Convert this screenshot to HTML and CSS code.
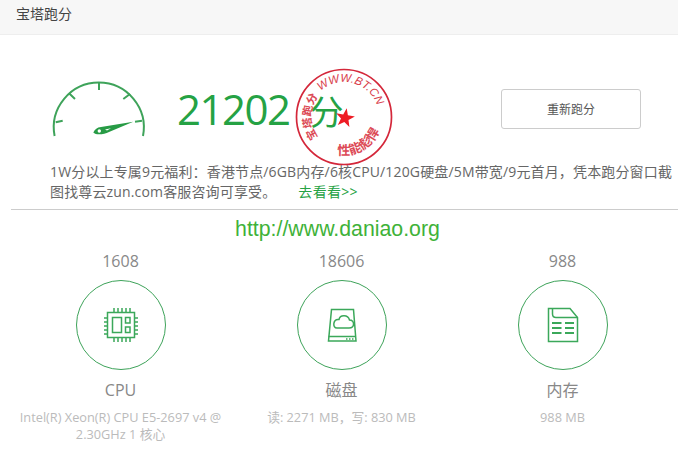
FILE: index.html
```html
<!DOCTYPE html>
<html lang="zh-CN">
<head>
<meta charset="utf-8">
<title>宝塔跑分</title>
<link rel="stylesheet" href="styles.css">
</head>
<body>
<header class="title-bar">宝塔跑分</header>
<section class="summary">
  <svg class="gauge" viewBox="0 0 100 64" width="100" height="64" aria-hidden="true">
    <path class="gauge-arc" d="M5.600 56 A45 45 0 1 1 94 56"/>
    <path class="gauge-tick" d="M50 2.700V10M20.300 13.600L26 19M81 14L74.300 19M6.700 42.300L13.700 40.700M93 40.700L86 41.700"/>
    <path class="gauge-needle" d="M44.300 52.500C46 49 48 47.500 52 47L84.300 41.700L60 52C55 54.500 47 55.500 44.300 52.500Z"/>
    <circle class="gauge-hole" cx="50.300" cy="51" r="1.700"/>
    <polygon class="gauge-hole" points="56,49.600 62,48.300 58,50.600"/>
  </svg>
  <div class="score">21202<span class="score-unit">分</span></div>
  <button class="rerun" type="button">重新跑分</button>
  <svg class="stamp" viewBox="0 0 100 100" width="100" height="100" aria-hidden="true">
    <defs>
      <path id="stamp-left" d="M24 70.300 A33 33 0 0 1 24 29.700"/>
      <path id="stamp-top" d="M26.600 24 A35 35 0 0 1 82.900 38"/>
      <path id="stamp-bottom" d="M37 85.700 A38 38 0 0 0 87.400 56.600"/>
    </defs>
    <circle class="stamp-ring" cx="50" cy="50" r="47.500"/>
    <text class="stamp-text stamp-left"><textPath href="#stamp-left">宝塔跑分</textPath></text>
    <text class="stamp-latin"><textPath href="#stamp-top">WWW.BT.CN</textPath></text>
    <text class="stamp-text stamp-bottom"><textPath href="#stamp-bottom" startOffset="10%">性能彪悍</textPath></text>
    <polygon class="stamp-star" points="52.700,41.200 53.900,48.200 60.900,49.600 54.500,52.900 55.400,60 50.300,54.900 43.800,58 47,51.600 42.200,46.300 49.200,47.400"/>
  </svg>
</section>
<p class="promo">1W分以上专属9元福利：香港节点/6GB内存/6核CPU/120G硬盘/5M带宽/9元首月，凭本跑分窗口截图找尊云zun.com客服咨询可享受。<a class="promo-link" href="#">去看看&gt;&gt;</a></p>
<hr class="rule">
<p class="site-url">http://www.daniao.org</p>
<section class="stats">
  <article class="stat">
    <div class="stat-score">1608</div>
    <div class="stat-ring">
      <svg class="stat-icon" viewBox="0 0 36 36" width="36" height="36" aria-hidden="true">
        <rect x="4.500" y="5.500" width="27" height="25"/>
        <rect x="9.500" y="10.500" width="9" height="15"/>
        <rect x="22.500" y="10.500" width="4.500" height="5.500"/>
        <rect x="22.500" y="20" width="4.500" height="5.500"/>
        <path d="M11 1V5M15 1V5M19 1V5M23 1V5M27 1V5M11 31V35M15 31V35M19 31V35M23 31V35M27 31V35M1 11H4M1 15H4M1 19H4M1 23H4M1 27H4M32 11H35M32 15H35M32 19H35M32 23H35M32 27H35"/>
      </svg>
    </div>
    <div class="stat-name">CPU</div>
    <div class="stat-detail">Intel(R) Xeon(R) CPU E5-2697 v4 @ 2.30GHz 1 核心</div>
  </article>
  <article class="stat">
    <div class="stat-score">18606</div>
    <div class="stat-ring">
      <svg class="stat-icon" viewBox="0 0 36 36" width="36" height="36" aria-hidden="true">
        <path d="M7.500 2.500H29.500L32 34H4.500Z"/>
        <path d="M4.500 29.500H32"/>
        <path d="M13 21H25C31 21 31 13 25.500 13C24 7.500 16 7.500 15 12.500C9 11.500 8 21 13 21Z"/>
        <path d="M22 32H23.500M25 32H26.500M28 32H29.500"/>
      </svg>
    </div>
    <div class="stat-name">磁盘</div>
    <div class="stat-detail">读: 2271 MB，写: 830 MB</div>
  </article>
  <article class="stat">
    <div class="stat-score">988</div>
    <div class="stat-ring">
      <svg class="stat-icon" viewBox="0 0 36 36" width="36" height="36" aria-hidden="true">
        <path d="M3.500 1.500H25L32.500 10.500V34.500H3.500Z"/>
        <path d="M7.500 1.500V7C7.500 9.500 9 10.500 11 10.500H32.500"/>
        <path class="thick" d="M7 16H16.500M20 16H29M7 21H16.500M20 21H29M7 26H16.500M20 26H29"/>
      </svg>
    </div>
    <div class="stat-name">内存</div>
    <div class="stat-detail">988 MB</div>
  </article>
</section>
</body>
</html>
```

FILE: styles.css
```css
* { box-sizing: border-box; }
html, body { margin: 0; padding: 0; }
body {
  width: 678px;
  height: 460px;
  overflow: hidden;
  background: #fff;
  color: #666;
  font-family: "Open Sans", "Noto Sans CJK SC", sans-serif;
}
.title-bar {
  height: 35px;
  padding-left: 16px;
  line-height: 28px;
  font-size: 14px;
  color: #444;
  background: #f7f7f7;
  border-bottom: 1px solid #eee;
}
.summary {
  position: relative;
  display: flex;
  align-items: flex-start;
  height: 127px;
  padding-left: 49px;
}
.gauge { flex: none; margin-top: 45px; }
.gauge-arc, .gauge-tick { fill: none; stroke: #3ea35a; stroke-width: 2; }
.gauge-needle { fill: #279b45; }
.gauge-hole { fill: #fff; }
.score {
  flex: none;
  width: 323px;
  margin: 44px 0 0 28px;
  font-size: 42px;
  line-height: 60px;
  letter-spacing: -1.500px;
  color: #25a244;
}
.score-unit { margin-left: 20px; font-size: 34px; }
.rerun {
  flex: none;
  width: 140px;
  height: 40px;
  margin: 54px 0 0 1px;
  padding: 0;
  font: 12px "Open Sans", "Noto Sans CJK SC", sans-serif;
  color: #555;
  background: #fff;
  border: 1px solid #ccc;
  border-radius: 3px;
}
.stamp { position: absolute; left: 294px; top: 32px; }
.stamp-ring { fill: none; stroke: #d4273a; stroke-width: 1.700; }
.stamp-text { fill: #dc4a56; font-weight: 700; }
.stamp-left { font-size: 11px; }
.stamp-latin { fill: #d83c4a; font-family: "Liberation Sans", sans-serif; font-size: 11.500px; font-style: italic; }
.stamp-bottom { font-size: 13px; }
.stamp-star { fill: #ee1c25; }
.promo {
  width: 678px;
  margin: 0;
  padding: 0 2px 0 50px;
  font-size: 14px;
  line-height: 20px;
  letter-spacing: 0.150px;
  color: #666;
}
.promo-link { margin-left: 22px; color: #25a244; text-decoration: none; letter-spacing: 0.300px; }
.rule { height: 1px; margin: 7px 0 0 11px; border: 0; background: #ccc; }
.site-url {
  margin: 7px 0 0;
  padding-right: 3px;
  font-family: "Liberation Sans", sans-serif;
  font-size: 21.300px;
  line-height: 24px;
  text-align: center;
  color: #3fb239;
}
.stats {
  display: grid;
  grid-template-columns: repeat(3, 221px);
  padding-left: 10px;
  margin-top: 8px;
  text-align: center;
}
.stat-score { font-size: 16px; line-height: 24px; color: #888; }
.stat-ring {
  display: flex;
  align-items: center;
  justify-content: center;
  width: 90px;
  height: 90px;
  margin: 7px auto 0;
  border: 1px solid #3ea35a;
  border-radius: 50%;
}
.stat-icon { fill: none; stroke: #3ba85a; stroke-width: 1.500; }
.stat-icon .thick { stroke-width: 1.800; }
.stat-name { margin-top: 9px; font-size: 16px; line-height: 22px; color: #888; }
.stat-detail { margin-top: 8px; font-size: 12.750px; line-height: 16.500px; color: #bbb; }
```
